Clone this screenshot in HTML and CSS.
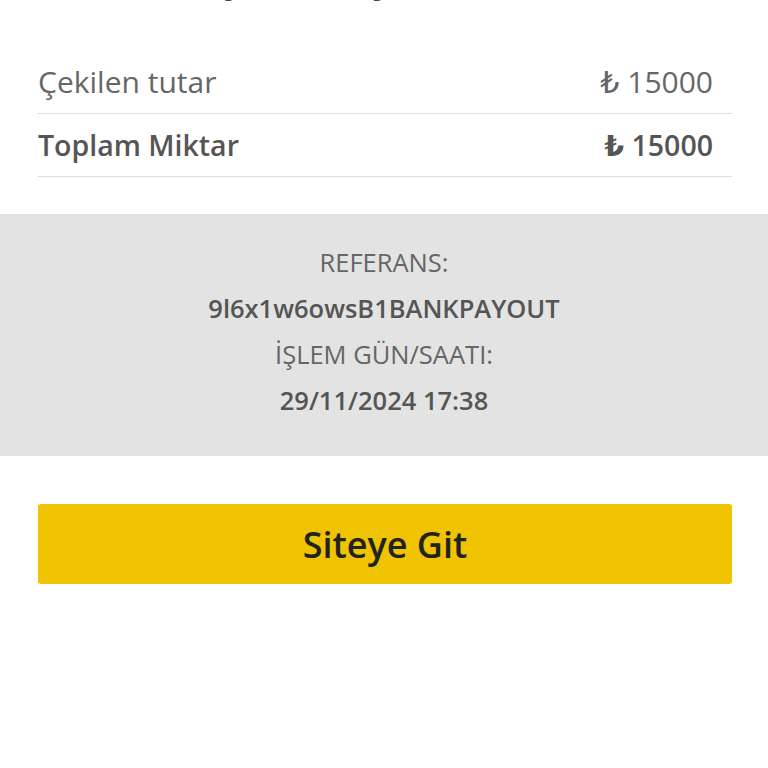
FILE: index.html
```html
<!DOCTYPE html>
<html lang="tr">

<head>
    <meta charset="UTF-8">
    <meta name="viewport" content="width=device-width, initial-scale=1.0">
    <title>Çekim Detayı</title>
    <link rel="stylesheet" href="styles.css">
</head>

<body>
    <div class="summary">
        <h2 class="title">İşlem Başarılı Oldu</h2>
        <div class="row">
            <span class="label">Çekilen tutar</span>
            <span class="value">₺ 15000</span>
        </div>
        <div class="row total">
            <span class="label">Toplam Miktar</span>
            <span class="value">₺ 15000</span>
        </div>
    </div>

    <div class="details">
        <p>REFERANS:</p>
        <p class="strong">9l6x1w6owsB1BANKPAYOUT</p>
        <p>İŞLEM GÜN/SAATI:</p>
        <p class="strong">29/11/2024 17:38</p>
    </div>

    <div class="actions">
        <button type="button" class="site-button">Siteye Git</button>
    </div>
</body>

</html>
```

FILE: styles.css
```css
body {
    font-family: "Open Sans", "DejaVu Sans", sans-serif;
    background-color: #fff;
    color: #666;
    margin: 0;
    padding: 0;
}

.summary {
    padding: 0 36px 0 38px;
}

.title {
    margin: -43px 0 0;
    height: 94px;
    line-height: 40px;
    font-size: 38px;
    font-weight: 700;
    color: #444;
    text-align: center;
}

.row {
    display: flex;
    justify-content: space-between;
    align-items: center;
    padding: 11px 0;
    line-height: 40px;
    font-size: 30px;
    border-bottom: 1px solid #ddd;
}

.row .value {
    padding-right: 19px;
}

.row.total {
    font-size: 28.5px;
    font-weight: 600;
    color: #555;
}

.details {
    margin-top: 37px;
    background-color: #e3e3e3;
    padding: 25px 20px 33px;
    text-align: center;
    font-size: 25.5px;
    line-height: 46px;
    color: #666;
}

.details p {
    margin: 0;
}

.details .strong {
    font-weight: 600;
    color: #555;
}

.actions {
    padding: 48px 36px 0 38px;
}

.site-button {
    width: 100%;
    height: 80px;
    border: none;
    border-radius: 3px;
    background-color: #f0c300;
    color: #222;
    font-family: "Open Sans", sans-serif;
    font-size: 36px;
    font-weight: 600;
    cursor: pointer;
}
```
